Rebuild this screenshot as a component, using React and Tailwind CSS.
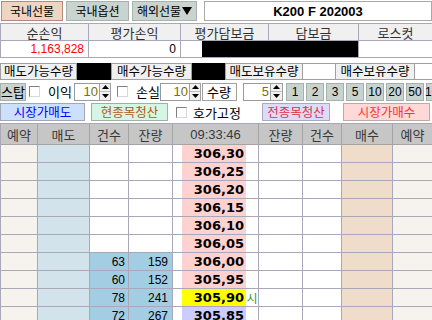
import React from "react";

const LINE = "border-[#a8a8b8]";

function Check() {
  return (
    <div className="w-[11px] h-[11px] bg-white border border-t-[#808080] border-l-[#808080] border-r-[#d8d8d8] border-b-[#d8d8d8]" />
  );
}

function Arrows({ w }) {
  return (
    <div className={`${w} h-full flex flex-col border border-[#a0a0a0] bg-[#f0f0f0]`}>
      <div className="flex-1 flex items-center justify-center border-b border-[#c0c0c0]">
        <svg width="7" height="4" viewBox="0 0 7 4"><path d="M3.5 0L7 4H0z" fill="#000" /></svg>
      </div>
      <div className="flex-1 flex items-center justify-center">
        <svg width="7" height="4" viewBox="0 0 7 4"><path d="M0 0H7L3.5 4z" fill="#000" /></svg>
      </div>
    </div>
  );
}

function Spin({ w, aw, val }) {
  return (
    <div className="flex h-[18px]">
      <div className={`${w} h-full bg-white border border-[#9a9a9a] border-r-0 flex items-center justify-end pr-[1px] text-[#7d7000] font-['Liberation_Sans',sans-serif] text-[13px]`}>
        {val}
      </div>
      <Arrows w={aw} />
    </div>
  );
}

function NumBtn({ children }) {
  return (
    <div className="w-[18px] h-[18px] mr-[2px] shrink-0 bg-[#c8d3cf] border border-[#a4b0ac] flex items-center justify-center font-['Liberation_Sans',sans-serif] text-[12px]">
      {children}
    </div>
  );
}

const prices = ["306,30", "306,25", "306,20", "306,15", "306,10", "306,05", "306,00", "305,95", "305,90", "305,85"];
const sells = { 6: [63, 159], 7: [60, 152], 8: [78, 241], 9: [72, 267] };

export default function App() {
  return (
    <div className="w-[432px] h-[320px] overflow-hidden bg-white font-['Noto_Sans_CJK_KR',sans-serif] text-[12px] leading-none text-black">
      {/* Row 1: tabs */}
      <div className="flex h-[21px] pt-px">
        <div className="ml-px w-[62px] h-[20px] border border-[#b48a80] bg-[#ecd6c2] flex items-center justify-center">국내선물</div>
        <div className="ml-[3px] w-[63px] h-[20px] border border-[#a6b2ae] bg-[#c9d4cf] flex items-center justify-center">국내옵션</div>
        <div className="ml-[3px] w-[65px] h-[20px] border border-[#a6b2ae] bg-[#c9d4cf] flex items-center justify-center">
          해외선물
          <svg width="10" height="8" viewBox="0 0 10 8" className="ml-px"><path d="M0 0H10L5 8z" fill="#000" /></svg>
        </div>
        <div className="ml-[7px] flex-1 h-[20px] border border-[#a8a8a8] bg-white flex items-center justify-center font-['Liberation_Sans',sans-serif] font-bold text-[13px]">
          K200 F 202003
        </div>
      </div>

      {/* Row 2: P&L table */}
      <div className={`mt-[2px] grid grid-cols-[88px_92px_88px_90px_74px] border-t border-l ${LINE}`}>
        {["순손익", "평가손익", "평가담보금", "담보금", "로스컷"].map((t) => (
          <div key={t} className={`h-[17px] bg-[#f0f0f0] border-r border-b ${LINE} flex items-center justify-center text-[13px] text-[#303030]`}>
            {t}
          </div>
        ))}
        <div className={`h-[17px] border-r border-b ${LINE} flex items-center justify-end pr-[4px] text-[#ff0000] font-['Liberation_Sans',sans-serif] text-[12px]`}>1,163,828</div>
        <div className={`h-[17px] border-r border-b ${LINE} flex items-center justify-end pr-[4px] font-['Liberation_Sans',sans-serif] text-[12px]`}>0</div>
        <div className={`h-[17px] border-b ${LINE} flex`}>
          <div className="w-[21px]" />
          <div className="flex-1 bg-black" />
        </div>
        <div className={`h-[17px] border-r border-b ${LINE} bg-black`} />
        <div className={`h-[17px] border-r border-b ${LINE}`} />
      </div>

      {/* Row 3: quantities */}
      <div className="mt-[5px] flex h-[17px]">
        <div className="w-[77px] h-full bg-[#f0f0f0] border border-[#a0a0a0] flex items-center justify-center text-[12.5px]">매도가능수량</div>
        <div className="w-[34px] h-full bg-black" />
        <div className="w-[81px] h-full bg-[#f0f0f0] border border-[#a0a0a0] flex items-center justify-center text-[12.5px]">매수가능수량</div>
        <div className="w-[33px] h-full bg-black" />
        <div className="w-[78px] h-full bg-[#f0f0f0] border border-[#a0a0a0] flex items-center justify-center text-[12.5px]">매도보유수량</div>
        <div className="w-[32px] h-full bg-white border-y border-[#a0a0a0]" />
        <div className="w-[80px] h-full bg-[#f0f0f0] border border-[#a0a0a0] flex items-center justify-center text-[12.5px]">매수보유수량</div>
        <div className="flex-1 h-full bg-white border-y border-[#a0a0a0]" />
      </div>

      {/* Row 4: stop controls */}
      <div className="mt-[2px] flex items-center h-[19px] overflow-hidden">
        <div className="w-[26px] h-[18px] shrink-0 bg-[#c8d3cf] border border-[#a4b0ac] flex items-center justify-center text-[13px]">스탑</div>
        <div className="ml-[3px] shrink-0"><Check /></div>
        <div className="w-[34px] shrink-0 pl-[8px] text-[13px]">이익</div>
        <Spin w="w-[25px]" aw="w-[12px]" val="10" />
        <div className="ml-[6px] shrink-0"><Check /></div>
        <div className="w-[32px] shrink-0 pl-[8px] text-[13px]">손실</div>
        <Spin w="w-[29px]" aw="w-[12px]" val="10" />
        <div className="ml-px w-[35px] h-[18px] shrink-0 border border-[#a0a0a0] bg-white flex items-center pl-[4px] text-[13px]">수량</div>
        <div className="ml-[6px] shrink-0"><Spin w="w-[27px]" aw="w-[13px]" val="5" /></div>
        <div className="ml-[3px] flex">
          {["1", "2", "3", "5", "10", "20", "50", "100"].map((n) => (
            <NumBtn key={n}>{n}</NumBtn>
          ))}
        </div>
      </div>

      {/* Row 5: order buttons */}
      <div className="mt-[2px] flex items-center h-[18px]">
        <div className="w-[85px] h-[18px] bg-[#cde0fb] border border-[#a0a8b8] flex items-center justify-center text-[#0000ff] text-[12.5px]">시장가매도</div>
        <div className="ml-[6px] w-[77px] h-[18px] bg-[#d6f6e4] border border-[#a0b0a8] flex items-center justify-center text-[#b25a10] text-[12.5px]">현종목청산</div>
        <div className="ml-[8px]"><Check /></div>
        <div className="w-[75px] pl-[6px] text-[13px]">호가고정</div>
        <div className="w-[68px] h-[18px] bg-[#dcdcfa] border border-[#a8a8c0] flex items-center justify-center text-[#e03048] text-[12.5px]">전종목청산</div>
        <div className="ml-[13px] w-[87px] h-[18px] bg-[#ffd8d8] border border-[#c0a8a8] flex items-center justify-center text-[#ff3030] text-[12.5px]">시장가매수</div>
      </div>

      {/* Order book */}
      <div className={`mt-[2px] grid grid-cols-[37px_52px_39px_44px_86px_44px_39px_51px_40px] border-t border-l ${LINE}`}>
        {["예약", "매도", "건수", "잔량", "09:33:46", "잔량", "건수", "매수", "예약"].map((t, i) => (
          <div
            key={i}
            className={`h-[21px] bg-[#c6c6c6] border-r border-b border-[#a4a4a4] flex items-center justify-center text-[13px] text-[#383838] ${i === 4 ? "font-['Liberation_Sans',sans-serif] text-[12.5px]" : ""}`}
          >
            {t}
          </div>
        ))}
        {prices.map((p, r) => {
          const s = sells[r];
          const pbg = r < 8 ? "bg-[#ffd2d2]" : r === 8 ? "bg-[#ffff00]" : "bg-[#ccccff]";
          return (
            <React.Fragment key={p}>
              <div className={`h-[18px] bg-[#f6f3ef] border-r border-b ${LINE}`} />
              <div className={`h-[18px] bg-[#d3e3eb] border-r border-b ${LINE}`} />
              <div className={`h-[18px] ${s ? "bg-[#a3cde3]" : "bg-white"} border-r border-b ${LINE} flex items-center justify-end pr-[3px] font-['Liberation_Sans',sans-serif] text-[12px]`}>
                {s ? s[0] : ""}
              </div>
              <div className={`h-[18px] ${s ? "bg-[#a3cde3]" : "bg-white"} border-r border-b ${LINE} flex items-center justify-end pr-[4px] font-['Liberation_Sans',sans-serif] text-[12px]`}>
                {s ? s[1] : ""}
              </div>
              <div className={`h-[18px] border-r border-b ${LINE} flex`}>
                <div className="w-[9px]" />
                <div className={`w-[64px] ${pbg} flex items-center justify-end pr-[2px] font-['DejaVu_Sans',sans-serif] font-bold text-[13px]`}>
                  {p}
                </div>
                <div className="flex-1 flex items-center justify-center text-[#1fa040] text-[12px]">{r === 8 ? "시" : ""}</div>
              </div>
              <div className={`h-[18px] bg-white border-r border-b ${LINE}`} />
              <div className={`h-[18px] bg-white border-r border-b ${LINE}`} />
              <div className={`h-[18px] bg-[#f0dcca] border-r border-b ${LINE}`} />
              <div className={`h-[18px] bg-[#f6f3ef] border-r border-b ${LINE}`} />
            </React.Fragment>
          );
        })}
      </div>
    </div>
  );
}
